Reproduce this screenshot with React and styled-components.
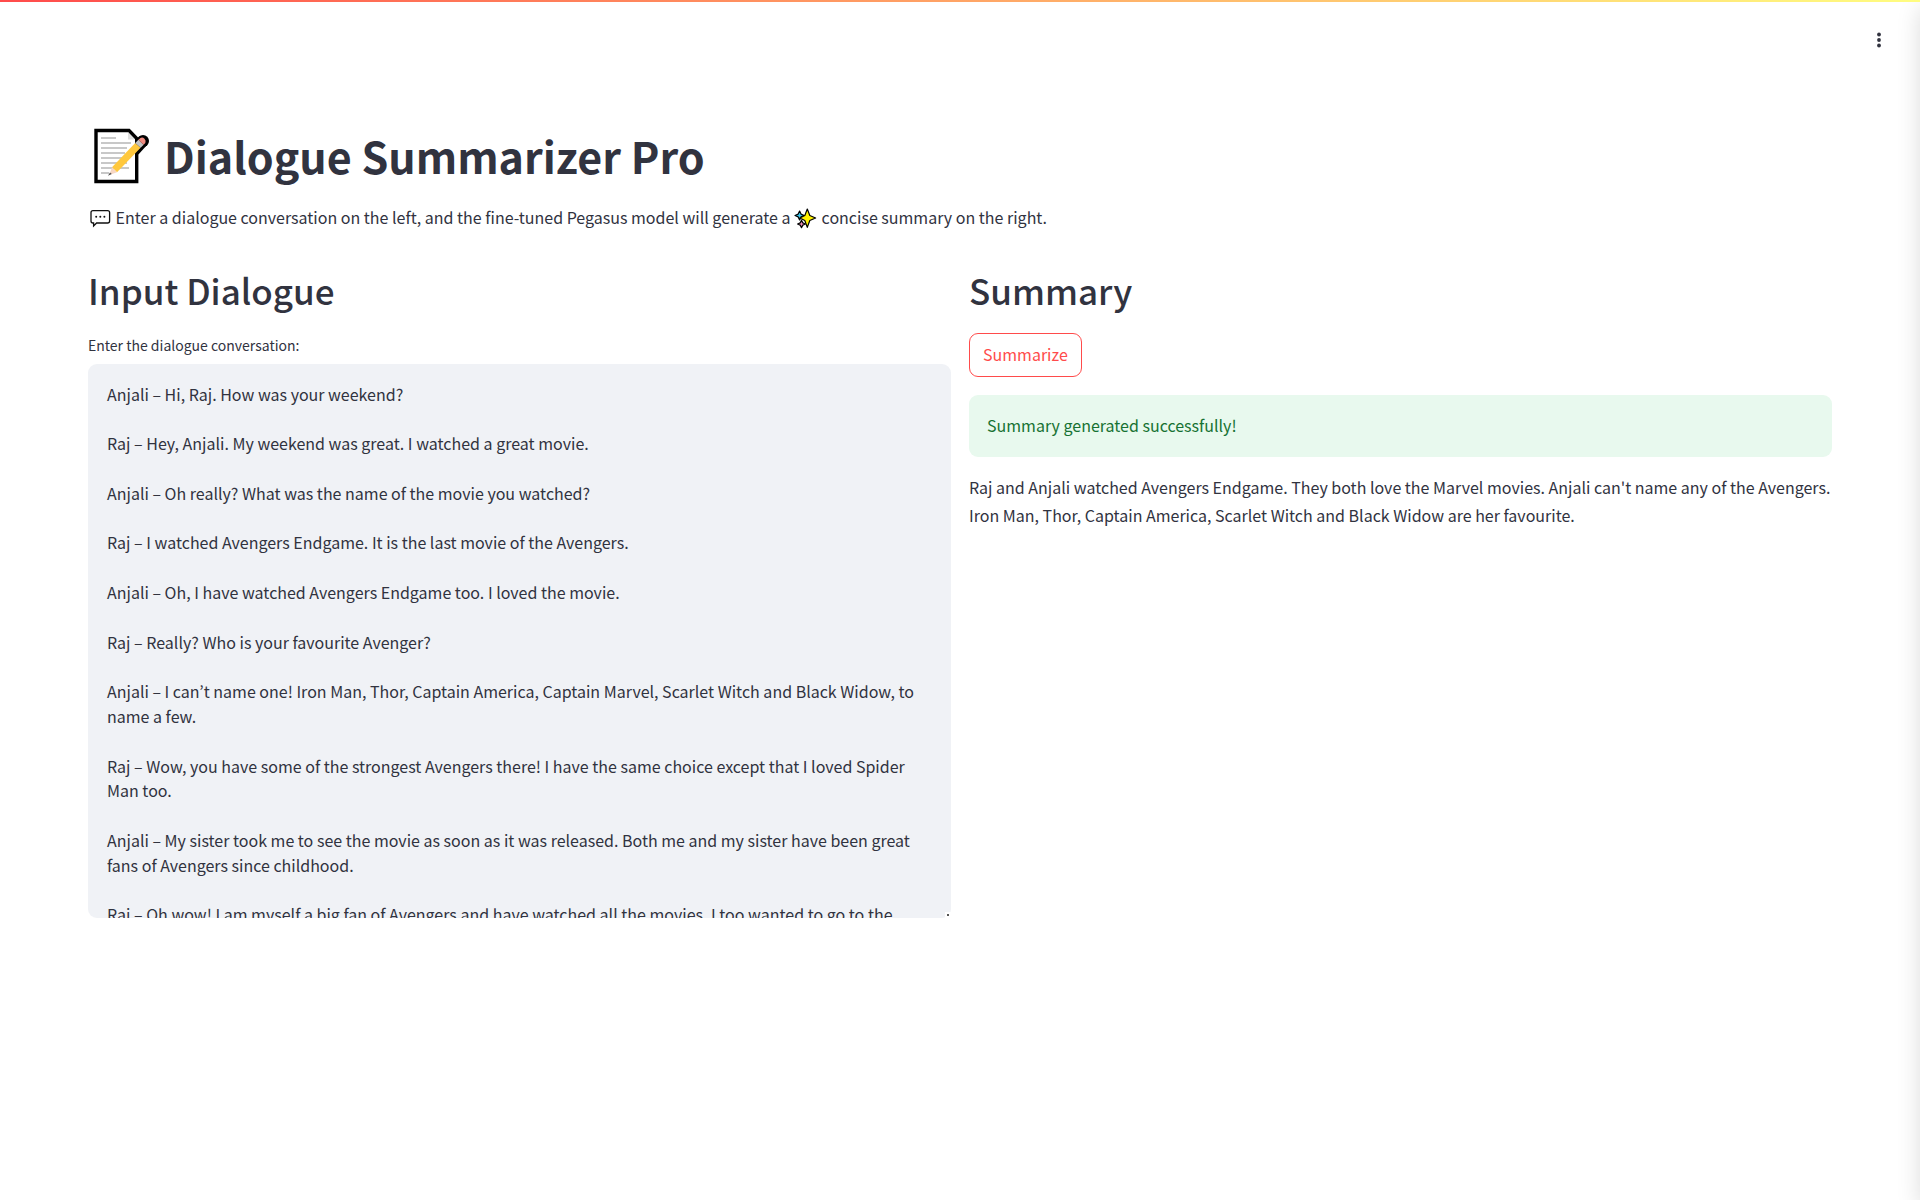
import React, { useState } from "react";
import styled, { createGlobalStyle } from "styled-components";

const GlobalStyle = createGlobalStyle`
  *, *::before, *::after { box-sizing: border-box; }
  body {
    margin: 0;
    background: #ffffff;
    color: #31333f;
    font-family: "Noto Sans CJK KR", "Noto Sans", sans-serif;
    font-size: 16px;
    line-height: 28px;
  }
`;

const Page = styled.div`
  min-height: 100vh;
  display: flex;
  flex-direction: column;
`;

const Drawer = styled.div`
  position: fixed;
  top: 0;
  bottom: 0;
  right: -40px;
  width: 40px;
  box-shadow: 0 8px 24px rgba(0, 0, 0, 0.14);
`;

const Decoration = styled.div`
  position: relative;
  z-index: 1;
  height: 2px;
  background: linear-gradient(90deg, #ff4b4b, #fffd80);
`;

const Header = styled.header`
  display: flex;
  justify-content: flex-end;
  padding: 24px 27px;
`;

const MenuButton = styled.button`
  display: flex;
  align-items: center;
  justify-content: center;
  width: 28px;
  height: 28px;
  padding: 0;
  border: 0;
  background: transparent;
  color: #31333f;
`;

const Main = styled.main`
  padding: 41px 88px 88px;
`;

const Title = styled.h1`
  display: flex;
  align-items: center;
  gap: 10px;
  margin: 0;
  font-size: 43px;
  line-height: 72px;
  font-weight: 700;
`;

const TitleIcon = styled.svg`
  flex: none;
  width: 66px;
  height: 66px;
`;

const Intro = styled.p`
  margin: 12px 0 18px;
`;

const InlineIcon = styled.svg`
  width: 24px;
  height: 24px;
  vertical-align: middle;
`;

const Columns = styled.div`
  display: grid;
  grid-template-columns: repeat(2, minmax(0, 1fr));
  gap: 18px;
`;

const Column = styled.section`
  display: flex;
  flex-direction: column;
`;

const SectionTitle = styled.h2`
  margin: 0;
  padding: 19px 0 22px;
  font-size: 35px;
  line-height: 42px;
  font-weight: 500;
`;

const Label = styled.label`
  font-size: 14px;
  line-height: 24px;
  margin-bottom: 7px;
`;

const TextArea = styled.textarea`
  display: block;
  width: 100%;
  height: 554px;
  padding: 18px 19px;
  border: 0;
  border-radius: 9px;
  background: #f0f2f6;
  color: inherit;
  font: inherit;
  line-height: 1.55;
  resize: vertical;
  outline: none;

  &::-webkit-scrollbar {
    width: 6px;
    height: 6px;
    background: transparent;
  }

  &::-webkit-resizer {
    background: radial-gradient(circle at 3px 3px, #555555 1px, #ffffff 1px) right bottom / 6px 6px no-repeat;
  }
`;

const ActionButton = styled.button`
  align-self: flex-start;
  height: 44px;
  padding: 0 13px 2px;
  border: 1px solid #ff4b4b;
  border-radius: 9px;
  background: #ffffff;
  color: #ff4b4b;
  font: inherit;
`;

const Alert = styled.div`
  margin: 18px 0 16px;
  padding: 16px 18px 18px;
  border-radius: 9px;
  background: #e8f9ee;
  color: #177233;
`;

const Result = styled.p`
  margin: 0;
`;

const MEMO_LINES = [
  [17, 28],
  [22, 43],
  [27, 39],
  [32, 37],
  [37, 42],
  [42, 39],
  [47, 41],
  [52, 21],
];

function MemoIcon() {
  return (
    <TitleIcon viewBox="0 1 66 66" aria-hidden="true">
      <path d="M8 9.5H41L48.7 17.5V60.5H8Z" fill="#fff" stroke="#000" strokeWidth="3.4" />
      <path d="M40 11.2V18.4H47Z" fill="#dedede" />
      {MEMO_LINES.map(([y, end]) => (
        <path key={y} d={`M13 ${y}H${end}`} stroke="#ababab" strokeWidth="1.3" />
      ))}
      <path d="M47 19.5L52 15L59.5 23.5L50.4 33.5L47 30Z" fill="#000" />
      <circle cx="55" cy="20" r="6" fill="#000" />
      <path d="M47.2 22L52.6 26.8L29 51.2L24 46.3Z" fill="#ffc83d" />
      <path d="M24 46.3L29 51.2L21.2 54Z" fill="#f7d7c4" />
      <path d="M22 51.5L23.8 53.1L20 54.7Z" fill="#555" />
      <path d="M50.4 18.8L55.6 23.8L52.6 26.8L47.2 22Z" fill="#c3c3c3" />
      <path d="M50.4 18.8L52.5 17Q54.5 15.8 56.5 17.8Q58.3 19.7 57.3 21.9L55.6 23.8Z" fill="#f08b80" />
    </TitleIcon>
  );
}

function SpeechIcon() {
  return (
    <InlineIcon viewBox="0 2 24 24" aria-hidden="true">
      <path
        d="M5 4.6H19.6Q21.6 4.6 21.6 6.6V15Q21.6 17 19.6 17H8.6L5.6 20V17H5Q3 17 3 15V6.6Q3 4.6 5 4.6Z"
        fill="#fff"
        stroke="#111"
        strokeWidth="1.3"
      />
      <circle cx="8.2" cy="10.8" r="1" fill="#111" />
      <circle cx="12.3" cy="10.8" r="1" fill="#111" />
      <circle cx="16.4" cy="10.8" r="1" fill="#111" />
    </InlineIcon>
  );
}

function SparklesIcon() {
  return (
    <InlineIcon viewBox="0 2 24 24" stroke="#000" strokeWidth="1.2" strokeLinejoin="round" aria-hidden="true">
      <path d="M7.5 14.4L8.8 16.9L11.4 18L8.8 19.1L7.5 21.6L6.2 19.1L3.6 18L6.2 16.9Z" fill="#f48fb9" />
      <path d="M5.6 5L7 8.1L10.2 9.5L7 10.9L5.6 14L4.2 10.9L1 9.5L4.2 8.1Z" fill="#3fc8ee" />
      <path d="M13.3 3L15.8 9.5L21.6 12L15.8 14.5L13.3 21.4L10.8 14.5L5.8 12L10.8 9.5Z" fill="#fff100" />
    </InlineIcon>
  );
}

const DIALOGUE = [
  "Anjali – Hi, Raj. How was your weekend?",
  "Raj – Hey, Anjali. My weekend was great. I watched a great movie.",
  "Anjali – Oh really? What was the name of the movie you watched?",
  "Raj – I watched Avengers Endgame. It is the last movie of the Avengers.",
  "Anjali – Oh, I have watched Avengers Endgame too. I loved the movie.",
  "Raj – Really? Who is your favourite Avenger?",
  "Anjali – I can’t name one! Iron Man, Thor, Captain America, Captain Marvel, Scarlet Witch and Black Widow, to name a few.",
  "Raj – Wow, you have some of the strongest Avengers there! I have the same choice except that I loved Spider Man too.",
  "Anjali – My sister took me to see the movie as soon as it was released. Both me and my sister have been great fans of Avengers since childhood.",
  "Raj – Oh wow! I am myself a big fan of Avengers and have watched all the movies. I too wanted to go to the",
].join("\n\n");

export default function App() {
  const [dialogue, setDialogue] = useState(DIALOGUE);
  return (
    <Page>
      <GlobalStyle />
      <Decoration />
      <Header>
        <MenuButton type="button" aria-label="Main menu">
          <svg width="28" height="28" viewBox="0 0 28 28" fill="currentColor">
            <circle cx="14" cy="8.5" r="1.9" />
            <circle cx="14" cy="14" r="1.9" />
            <circle cx="14" cy="19.5" r="1.9" />
          </svg>
        </MenuButton>
      </Header>
      <Main>
        <Title>
          <MemoIcon />
          Dialogue Summarizer Pro
        </Title>
        <Intro>
          <SpeechIcon /> Enter a dialogue conversation on the left, and the fine-tuned Pegasus model will generate a{" "}
          <SparklesIcon /> concise summary on the right.
        </Intro>
        <Columns>
          <Column>
            <SectionTitle>Input Dialogue</SectionTitle>
            <Label htmlFor="dialogue">Enter the dialogue conversation:</Label>
            <TextArea
              id="dialogue"
              spellCheck={false}
              value={dialogue}
              onChange={(event) => setDialogue(event.target.value)}
            />
          </Column>
          <Column>
            <SectionTitle>Summary</SectionTitle>
            <ActionButton type="button">Summarize</ActionButton>
            <Alert role="status">Summary generated successfully!</Alert>
            <Result>
              Raj and Anjali watched Avengers Endgame. They both love the Marvel movies. Anjali can't name any of the
              Avengers. Iron Man, Thor, Captain America, Scarlet Witch and Black Widow are her favourite.
            </Result>
          </Column>
        </Columns>
      </Main>
      <Drawer />
    </Page>
  );
}
